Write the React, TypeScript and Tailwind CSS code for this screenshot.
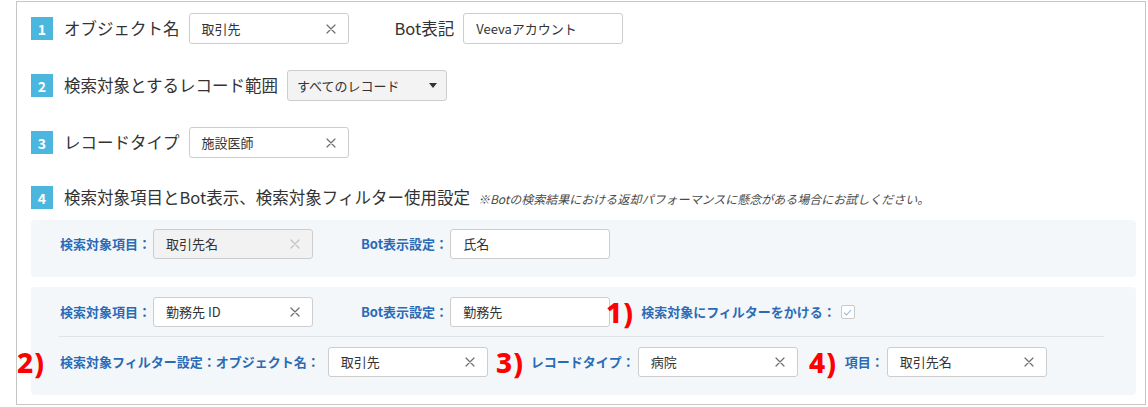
import React from 'react';

const ClearIcon = ({ light }: { light?: boolean }) => (
  <svg
    width="10"
    height="10"
    viewBox="0 0 10 10"
    className={light ? 'shrink-0 text-[#c2c2c2]' : 'shrink-0 text-[#6f6f6f]'}
  >
    <path d="M1 1L9 9M9 1L1 9" stroke="currentColor" strokeWidth="1.2" strokeLinecap="round" />
  </svg>
);

type FieldProps = {
  value: string;
  clear?: boolean;
  disabled?: boolean;
  tall?: boolean;
  className?: string;
};

const Field = ({ value, clear = true, disabled, tall, className = '' }: FieldProps) => (
  <div
    className={`flex w-[160px] shrink-0 items-center justify-between rounded-[3px] border border-[#cdcdcd] pl-[12px] pr-[12px] ${
      tall ? 'h-[31px]' : 'h-[30px]'
    } ${disabled ? 'bg-[#f2f2f2]' : 'bg-white'} ${className}`}
  >
    <span className="text-[13px] text-[#333]">{value}</span>
    {clear && <ClearIcon light={disabled} />}
  </div>
);

const Step = ({ n }: { n: number }) => (
  <span className="flex h-[23px] w-[22px] shrink-0 items-center justify-center bg-[#4bb7de] text-[14px] font-bold leading-none text-white">
    {n}
  </span>
);

// red annotation numbers that sit over the form
const Mark = ({ text, className }: { text: string; className: string }) => (
  <span
    className={`absolute top-0 bottom-0 flex items-center font-['Noto_Sans',sans-serif] text-[28px] font-extrabold leading-none tracking-[1px] text-[#ff0000] ${className}`}
  >
    {text}
  </span>
);

const BlueLabel = ({ children, className = '' }: { children: React.ReactNode; className?: string }) => (
  <span className={`shrink-0 text-[13px] font-bold whitespace-nowrap text-[#2a6bb7] ${className}`}>{children}</span>
);

export default function App() {
  return (
    <div className="h-[407px] w-[1148px] bg-white pt-px pl-[16px] font-['Noto_Sans_CJK_JP',sans-serif]">
      <div className="h-[404px] w-[1130px] border border-[#c6c6c6] pl-[14px]">
        {/* 1 */}
        <div className="mt-[11px] flex h-[31px] items-center">
          <Step n={1} />
          <span className="ml-[11px] text-[16.5px] text-[#333]">オブジェクト名</span>
          <Field className="ml-[9px]" value="取引先" tall />
          <span className="ml-[46px] text-[16.5px] text-[#333]">Bot表記</span>
          <Field className="ml-[9px]" value="Veevaアカウント" clear={false} tall />
        </div>

        {/* 2 */}
        <div className="mt-[26px] flex h-[31px] items-center">
          <Step n={2} />
          <span className="ml-[11px] text-[16.5px] text-[#333]">検索対象とするレコード範囲</span>
          <div className="ml-[9px] flex h-[31px] w-[160px] items-center justify-between rounded-[3px] border border-[#cdcdcd] bg-[#f3f3f3] pr-[9px] pl-[9px]">
            <span className="text-[13px] text-[#333]">すべてのレコード</span>
            <svg width="8" height="5" viewBox="0 0 8 5">
              <path d="M0 0H8L4 5Z" fill="#333" />
            </svg>
          </div>
        </div>

        {/* 3 */}
        <div className="mt-[26px] flex h-[31px] items-center">
          <Step n={3} />
          <span className="ml-[11px] text-[16.5px] text-[#333]">レコードタイプ</span>
          <Field className="ml-[9px]" value="施設医師" tall />
        </div>

        {/* 4 */}
        <div className="mt-[24px] flex h-[31px] items-center">
          <Step n={4} />
          <span className="ml-[11px] text-[16.5px] text-[#333]">検索対象項目とBot表示、検索対象フィルター使用設定</span>
          <span className="ml-[8px] mt-[3px] text-[12px] text-[#4a4a4a] italic">
            ※Botの検索結果における返却パフォーマンスに懸念がある場合にお試しください。
          </span>
        </div>

        <div className="mt-[7px] h-[57px] w-[1105px] rounded-[4px] bg-[#f4f7f9] pt-[9px] pl-[29px]">
          <div className="flex h-[30px] items-center">
            <BlueLabel>検索対象項目：</BlueLabel>
            <Field className="ml-[2px]" value="取引先名" disabled />
            <BlueLabel className="ml-[48px]">Bot表示設定：</BlueLabel>
            <Field className="ml-[2px]" value="氏名" clear={false} />
          </div>
        </div>

        <div className="mt-[10px] h-[108px] w-[1105px] rounded-[4px] bg-[#f4f7f9] pt-[10px] pl-[29px]">
          <div className="relative flex h-[30px] items-center">
            <BlueLabel>検索対象項目：</BlueLabel>
            <Field className="ml-[2px]" value="勤務先 ID" />
            <BlueLabel className="ml-[48px]">Bot表示設定：</BlueLabel>
            <Field className="ml-[2px]" value="勤務先" clear={false} />
            <BlueLabel className="ml-[31px]">検索対象にフィルターをかける：</BlueLabel>
            <span className="ml-[5px] flex h-[14px] w-[14px] items-center justify-center rounded-[2px] border border-[#c9c9c9] bg-white">
              <svg width="9" height="7" viewBox="0 0 9 7">
                <path d="M1 3.6L3.4 6L8 1" fill="none" stroke="#8fb8e0" strokeWidth="1.1" />
              </svg>
            </span>
            <Mark text="1)" className="left-[546px]" />
          </div>

          <div className="mt-[9px] mr-[32px] ml-[-1px] h-px bg-[#dfe3e6]" />

          <div className="relative mt-[10px] flex h-[30px] items-center">
            <Mark text="2)" className="left-[-43px]" />
            <BlueLabel>検索対象フィルター設定：オブジェクト名：</BlueLabel>
            <Field className="ml-[8px]" value="取引先" />
            <BlueLabel className="ml-[43px]">レコードタイプ：</BlueLabel>
            <Field className="ml-[3px]" value="病院" />
            <BlueLabel className="ml-[47px]">項目：</BlueLabel>
            <Field className="ml-[3px]" value="取引先名" />
            <Mark text="3)" className="left-[436px]" />
            <Mark text="4)" className="left-[749px]" />
          </div>
        </div>
      </div>
    </div>
  );
}
